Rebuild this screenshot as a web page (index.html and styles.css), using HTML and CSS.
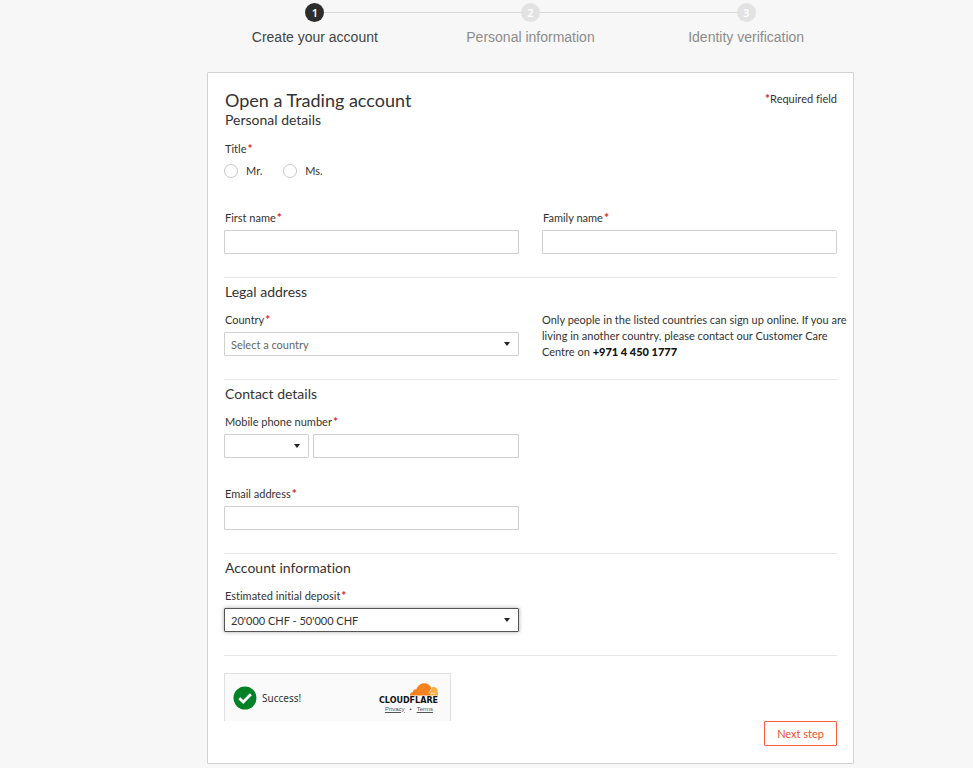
FILE: index.html
```html
<!DOCTYPE html>
<html lang="en">
<head>
    <meta charset="UTF-8">
    <meta name="viewport" content="width=device-width, initial-scale=1.0">
    <title>Open a Trading account</title>
    <link rel="stylesheet" href="styles.css">
</head>
<body>

<div class="page">
    <ol class="steps">
        <li class="step active"><span class="step-number">1</span>Create your account</li>
        <li class="step"><span class="step-number">2</span>Personal information</li>
        <li class="step"><span class="step-number">3</span>Identity verification</li>
    </ol>

    <form class="card">
        <section class="section">
            <div class="card-header">
                <h1>Open a Trading account</h1>
                <span class="required-note"><span class="star">*</span>Required field</span>
            </div>
            <h2>Personal details</h2>
            <fieldset class="title-group">
                <legend>Title<span class="star">*</span></legend>
                <div class="radios">
                    <label class="radio"><input type="radio" name="title" value="mr">Mr.</label>
                    <label class="radio"><input type="radio" name="title" value="ms">Ms.</label>
                </div>
            </fieldset>
            <div class="row">
                <div class="field">
                    <label for="firstName">First name<span class="star">*</span></label>
                    <input type="text" id="firstName">
                </div>
                <div class="field">
                    <label for="familyName">Family name<span class="star">*</span></label>
                    <input type="text" id="familyName">
                </div>
            </div>
        </section>

        <section class="section">
            <h2>Legal address</h2>
            <div class="row">
                <div class="field">
                    <label for="country">Country<span class="star">*</span></label>
                    <div class="select">
                        <select id="country" class="placeholder">
                            <option>Select a country</option>
                        </select>
                    </div>
                </div>
                <p class="hint">Only people in the listed countries can sign up online. If you are<br>living in another country, please contact our Customer Care<br>Centre on <strong>+971 4 450 1777</strong></p>
            </div>
        </section>

        <section class="section">
            <h2>Contact details</h2>
            <div class="row">
                <div class="field">
                    <label for="phone">Mobile phone number<span class="star">*</span></label>
                    <div class="phone">
                        <div class="select prefix">
                            <select aria-label="Country code">
                                <option></option>
                            </select>
                        </div>
                        <input type="tel" id="phone">
                    </div>
                </div>
            </div>
            <div class="row">
                <div class="field">
                    <label for="email">Email address<span class="star">*</span></label>
                    <input type="email" id="email">
                </div>
            </div>
        </section>

        <section class="section">
            <h2>Account information</h2>
            <div class="row">
                <div class="field">
                    <label for="deposit">Estimated initial deposit<span class="star">*</span></label>
                    <div class="select">
                        <select id="deposit" class="selected">
                            <option>20'000 CHF - 50'000 CHF</option>
                        </select>
                    </div>
                </div>
            </div>
        </section>

        <div class="card-footer">
            <div class="captcha">
                <svg class="check" viewBox="0 0 24 24" width="24" height="24" aria-hidden="true">
                    <circle cx="12" cy="12" r="11.5" fill="#038127"/>
                    <path d="M6.3 12.2l3.9 3.8 7.7-7.7" fill="none" stroke="#fff" stroke-width="2.8"/>
                </svg>
                <span class="captcha-text">Success!</span>
                <div class="brand">
                    <svg class="cloud" viewBox="0 0 28 13" width="28" height="13" aria-hidden="true">
                        <path d="M18.6 12.6l2.6-7.2c.8-1.100 1.700-1.400 2.500-1.300 2.300.1 3.700 1.700 3.900 4 .4 1.300.5 3 .3 4.500z" fill="#fbad41"/>
                        <path d="M0 12.6c-.1-2.200 1.200-3.500 3-3.600-.2-1.900 1.500-3.200 3.300-2.500C7.300 2.700 10.600.2 14.300.2c3.500 0 6.200 2 7.300 5.200l-1.800 7.200z" fill="#f6821f"/>
                        <path d="M21.8 5.200l-3 5M20.300 10.200h5" fill="none" stroke="#fafafa" stroke-width=".8"/>
                    </svg>
                    <span class="brand-name">CLOUDFLARE</span>
                    <span class="brand-links"><a href="#">Privacy</a><span>•</span><a href="#">Terms</a></span>
                </div>
            </div>
            <button type="submit" class="next">Next step</button>
        </div>
    </form>
</div>

</body>
</html>
```

FILE: styles.css
```css
* {
    box-sizing: border-box;
}

body {
    margin: 0;
    background-color: #f7f7f7;
    color: #333;
    font-family: Lato, sans-serif;
    font-size: 11px;
    font-variant-ligatures: none;
    line-height: 16px;
}

h1, h2, p {
    margin: 0;
    font-weight: 400;
}

.page {
    padding: 3px 119px 4px 207px;
}

/* Steps */
.steps {
    display: grid;
    grid-template-columns: repeat(3, 1fr);
    margin: 0 0 25px;
    padding: 0;
    list-style: none;
    font-family: "Liberation Sans", Arial, sans-serif;
    font-size: 14px;
    line-height: 20px;
    color: #8c8c8c;
}

.step {
    position: relative;
    display: flex;
    flex-direction: column;
    align-items: center;
    gap: 5px;
}

.step.active {
    color: #444;
}

/* line between two circles */
.step + .step::before {
    content: "";
    position: absolute;
    top: 9px;
    right: 50%;
    width: 100%;
    height: 1px;
    background-color: #d8d8d8;
}

.step-number {
    position: relative;
    z-index: 1;
    width: 19px;
    height: 19px;
    border-radius: 50%;
    background-color: #e2e2e2;
    color: #fff;
    font-family: "Noto Sans", sans-serif;
    font-size: 11px;
    font-weight: 600;
    line-height: 19px;
    text-align: center;
}

.step.active .step-number {
    z-index: 2;
    background-color: #2d2d2d;
}

/* Card */
.card {
    padding: 16px;
    background-color: #fff;
    border: 1px solid #d2d2d2;
    border-radius: 1px;
}

.card-header {
    display: flex;
    justify-content: space-between;
    align-items: flex-start;
}

.required-note {
    line-height: 20px;
}

h1 {
    padding-left: 1px;
    font-size: 18px;
    line-height: 22px;
}

h2 {
    margin-bottom: 11px;
    padding-left: 1px;
    font-size: 14px;
    line-height: 18px;
}

.section {
    padding-bottom: 19px;
    border-bottom: 1px solid #e6e6e6;
}

.section + .section {
    padding-top: 5px;
}

.star {
    margin-left: 1px;
    color: #e2231a;
    font-size: 12px;
    font-weight: 700;
    line-height: 1;
}

.title-group {
    margin: 12px 0 31px;
    padding: 0;
    border: none;
}

.title-group legend {
    padding: 0 0 0 1px;
}

.radios {
    display: flex;
    gap: 21px;
    margin-top: 6px;
}

.radio {
    display: flex;
    align-items: center;
    gap: 8px;
}

.radio input {
    appearance: none;
    width: 14px;
    height: 14px;
    margin: 0;
    background-color: #fff;
    border: 1px solid #c8c8c8;
    border-radius: 50%;
}

.row {
    display: grid;
    grid-template-columns: repeat(2, minmax(0, 1fr));
    column-gap: 23px;
}

.row + .row {
    margin-top: 24px;
}

.field {
    display: flex;
    flex-direction: column;
    gap: 4px;
    padding-bottom: 4px;
}

.field > label {
    height: 16px;
    padding-left: 1px;
}

.field input, .field select {
    width: 100%;
    height: 24px;
    padding: 0 6px;
    background-color: #fff;
    border: 1px solid #d0d0d0;
    border-radius: 1px;
    color: #333;
    font-family: inherit;
    font-size: 11px;
}

.field select {
    display: block;
    appearance: none;
}

.field select.placeholder {
    color: #666;
}

.field select.selected {
    border-color: #555;
    box-shadow: 0 0 4px #aaa;
}

.select {
    position: relative;
}

.select::after {
    content: "";
    position: absolute;
    top: 10px;
    right: 9px;
    border-top: 4px solid #222;
    border-left: 3px solid transparent;
    border-right: 3px solid transparent;
    pointer-events: none;
}

.phone {
    display: flex;
    gap: 4px;
}

.prefix {
    flex: 0 0 85px;
}

.hint {
    white-space: nowrap;
}

.hint strong {
    color: #111;
    font-weight: 900;
}

/* Footer */
.card-footer {
    display: flex;
    justify-content: space-between;
    align-items: flex-start;
    padding-top: 17px;
}

.captcha {
    display: flex;
    align-items: center;
    width: 227px;
    height: 48px;
    padding: 0 12px 0 8px;
    background-color: #fafafa;
    border: 1px solid #e0e0e0;
    border-bottom: none;
}

.captcha-text {
    margin-left: 5px;
    font-family: "Noto Sans", sans-serif;
    font-size: 10px;
}

.brand {
    display: flex;
    flex-direction: column;
    align-items: flex-end;
    margin-left: auto;
}

.brand-name {
    color: #111;
    font-family: "DejaVu Sans", sans-serif;
    font-size: 8px;
    font-weight: 700;
    line-height: 9px;
}

.brand-links {
    display: flex;
    gap: 5px;
    padding-right: 5px;
    font-family: "Liberation Sans", sans-serif;
    font-size: 6px;
    line-height: 8px;
}

.brand-links a {
    color: #555;
}

.next {
    height: 25px;
    margin-top: 48px;
    margin-bottom: 1px;
    padding: 0 12px;
    background-color: #fff;
    border: 1px solid #ff5a3c;
    border-radius: 1px;
    color: #f04e30;
    font-family: inherit;
    font-size: 11px;
    cursor: pointer;
}
```
